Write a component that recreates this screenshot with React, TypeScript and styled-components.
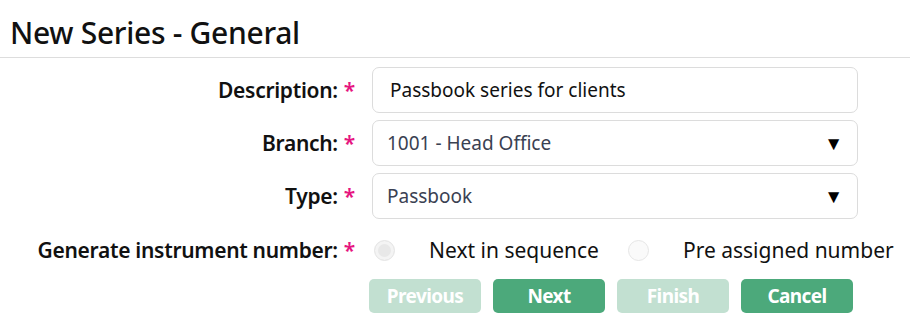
import * as React from 'react';
import styled, { createGlobalStyle } from 'styled-components';

const GlobalStyle = createGlobalStyle`
  body {
    margin: 0;
    background: #ffffff;
    font-family: 'Noto Sans', 'Open Sans', sans-serif;
    color: #111111;
  }
`;

const Page = styled.div`
  width: 910px;
  height: 327px;
  overflow: hidden;
`;

const Header = styled.div`
  padding: 12px 10px 0;
  border-bottom: 1px solid #dddddd;
  box-sizing: border-box;
  height: 58px;
`;

const Title = styled.h1`
  margin: 0;
  font-size: 30px;
  font-weight: 500;
  line-height: 42px;
  letter-spacing: -0.3px;
  color: #111111;
`;

const Form = styled.div`
  display: grid;
  grid-template-columns: 355px 486px;
  column-gap: 17px;
  row-gap: 7px;
  padding-top: 9px;
  align-items: center;
`;

const Label = styled.div`
  text-align: right;
  font-size: 21px;
  font-weight: 600;
  letter-spacing: -0.3px;
  color: #111111;
  white-space: nowrap;
`;

const Star = styled.span`
  color: #e6157f;
  margin-left: 6px;
`;

const Field = styled.div<{ $muted?: boolean }>`
  height: 46px;
  box-sizing: border-box;
  border: 1px solid #dcdcdc;
  border-radius: 7px;
  display: flex;
  align-items: center;
  justify-content: space-between;
  padding: 0 14px 0 ${(p) => (p.$muted ? '14px' : '17px')};
  font-size: 19px;
  color: ${(p) => (p.$muted ? '#3a4152' : '#111111')};
`;

const Arrow = styled.span`
  font-size: 19px;
  color: #000000;
`;

const RadioRow = styled.div`
  display: flex;
  align-items: center;
  height: 46px;
  margin-top: 1px;
  font-size: 21px;
  color: #111111;
  white-space: nowrap;
`;

const Radio = styled.span<{ $checked?: boolean }>`
  flex: none;
  width: 21px;
  height: 21px;
  border-radius: 50%;
  box-sizing: border-box;
  border: 1px solid #e6e6e6;
  background: ${(p) => (p.$checked ? '#e8e8e8' : '#fafafa')};
  margin: 0 34px 0 2px;
  ${(p) => (p.$checked ? 'box-shadow: inset 0 0 0 3px #f4f4f4;' : '')}
`;

const Option = styled.span`
  margin-right: 27px;
`;

const Buttons = styled.div`
  grid-column: 2;
  display: flex;
  gap: 12px;
  margin-left: -3px;
  margin-top: -1px;
`;

const Button = styled.button<{ $disabled?: boolean }>`
  width: 112px;
  height: 34px;
  border: none;
  border-radius: 5px;
  font-family: inherit;
  font-size: 19px;
  font-weight: 700;
  letter-spacing: -0.6px;
  color: #ffffff;
  background: ${(p) => (p.$disabled ? '#c2e0d1' : '#4ca97b')};
`;

function App() {
  return (
    <Page>
      <GlobalStyle />
      <Header>
        <Title>New Series - General</Title>
      </Header>
      <Form>
        <Label>
          Description:<Star>*</Star>
        </Label>
        <Field>Passbook series for clients</Field>
        <Label>
          Branch:<Star>*</Star>
        </Label>
        <Field $muted>
          1001 - Head Office
          <Arrow>▼</Arrow>
        </Field>
        <Label>
          Type:<Star>*</Star>
        </Label>
        <Field $muted>
          Passbook
          <Arrow>▼</Arrow>
        </Field>
        <Label>
          Generate instrument number:<Star>*</Star>
        </Label>
        <RadioRow>
          <Radio $checked />
          <Option>Next in sequence</Option>
          <Radio />
          <Option>Pre assigned number</Option>
        </RadioRow>
        <Buttons>
          <Button $disabled>Previous</Button>
          <Button>Next</Button>
          <Button $disabled>Finish</Button>
          <Button>Cancel</Button>
        </Buttons>
      </Form>
    </Page>
  );
}

export default App;
